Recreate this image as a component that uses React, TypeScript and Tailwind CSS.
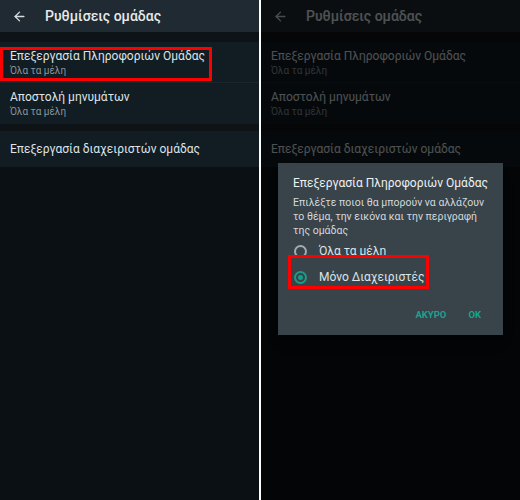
import { ArrowLeft } from "lucide-react";

function Screen({ dim }: { dim?: boolean }) {
  return (
    <div className="relative h-full w-full bg-[#0b1015]">
      <div className="flex h-[32px] items-center bg-[#1f2a32] pl-[12px]">
        <ArrowLeft className="h-[15px] w-[15px] text-[#d5dade]" strokeWidth={2.2} />
        <div className="ml-[18px] text-[14px] font-medium text-[#e6e9eb]">Ρυθμίσεις ομάδας</div>
      </div>
      <div className="h-[10px] bg-[#0d1317]" />
      <div className="bg-[#111c23]">
        <div className="flex h-[41px] flex-col justify-center border-b border-[#1a252c] px-[10px] pt-[2px]">
          <div className="text-[12px] leading-[15px] text-[#dfe3e6]">Επεξεργασία Πληροφοριών Ομάδας</div>
          <div className="text-[10px] leading-[13px] text-[#8a959c]">Όλα τα μέλη</div>
        </div>
        <div className="flex h-[41px] flex-col justify-center px-[10px]">
          <div className="text-[12px] leading-[15px] text-[#dfe3e6]">Αποστολή μηνυμάτων</div>
          <div className="text-[10px] leading-[13px] text-[#8a959c]">Όλα τα μέλη</div>
        </div>
      </div>
      <div className="h-[7px] bg-[#0d1317]" />
      <div className="flex h-[36px] items-center bg-[#111c23] px-[10px]">
        <div className="text-[12px] text-[#dfe3e6]">Επεξεργασία διαχειριστών ομάδας</div>
      </div>
      {dim ? <div className="absolute inset-0 bg-black/65" /> : null}
    </div>
  );
}

function Dialog() {
  return (
    <div className="absolute left-[17px] top-[163px] w-[225px] bg-[#38434a] pl-[15px] pr-[8px] pt-[12px] pb-[13px] shadow-lg">
      <div className="whitespace-nowrap text-[12px] leading-[16px] text-[#eef0f1]">Επεξεργασία Πληροφοριών Ομάδας</div>
      <div className="mt-[5px] text-[10.5px] leading-[14px] text-[#d3d8db]">
        Επιλέξτε ποιοι θα μπορούν να αλλάζουν το θέμα, την εικόνα και την περιγραφή της ομάδας
      </div>
      <div className="mt-[4px] flex items-center gap-[12px]">
        <div className="ml-[1px] h-[13px] w-[13px] rounded-full border-[2px] border-[#a3acb1]" />
        <div className="text-[12px] text-[#dfe3e6]">Όλα τα μέλη</div>
      </div>
      <div className="relative mt-[8px] flex items-center gap-[12px]">
        <div className="ml-[1px] flex h-[13px] w-[13px] items-center justify-center rounded-full border-[2px] border-[#1a9c87]">
          <div className="h-[5px] w-[5px] rounded-full bg-[#1a9c87]" />
        </div>
        <div className="text-[12px] text-[#dfe3e6]">Μόνο Διαχειριστές</div>
        <div className="absolute left-[-5px] top-[-13px] h-[34px] w-[141px] border-[3px] border-[#ff0000]" />
      </div>
      <div className="mt-[22px] flex justify-end gap-[22px] pr-[14px] text-[9.5px] font-bold text-[#17a58e]">
        <span>ΑΚΥΡΟ</span>
        <span>OK</span>
      </div>
    </div>
  );
}

export default function App() {
  return (
    <div className="flex h-[500px] w-[520px] bg-white" style={{ fontFamily: "Roboto, 'Noto Sans', sans-serif" }}>
      <div className="relative h-full w-[259px]">
        <Screen />
        <div className="absolute left-0 top-[47px] h-[34px] w-[212px] border-[3px] border-[#ff0000]" />
      </div>
      <div className="w-[2px] bg-white" />
      <div className="relative h-full w-[259px]">
        <Screen dim />
        <Dialog />
      </div>
    </div>
  );
}
